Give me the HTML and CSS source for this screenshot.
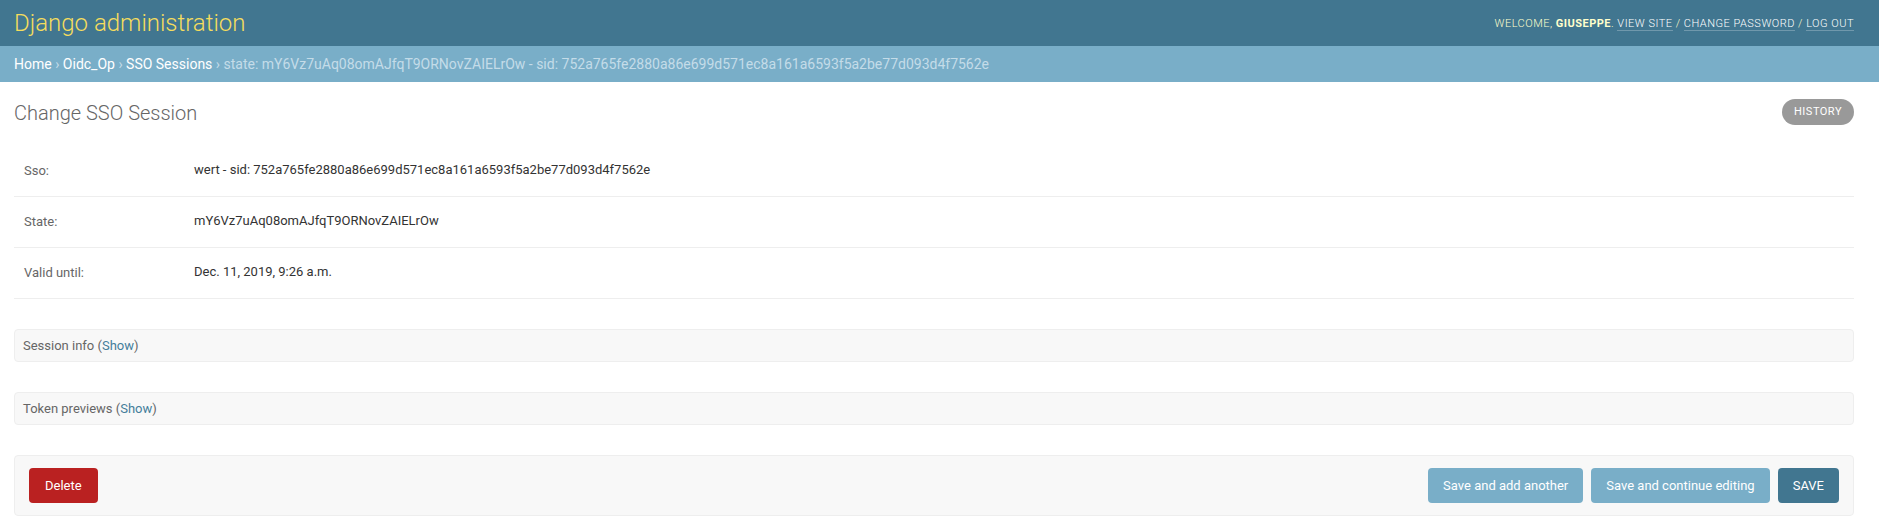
FILE: index.html
```html
<!DOCTYPE html>
<html lang="en">
<head>
<meta charset="utf-8">
<title>Change SSO Session | Django site admin</title>
<link rel="stylesheet" href="styles.css">
</head>
<body>
<header class="header">
  <h1 class="branding">Django administration</h1>
  <div class="user-tools">
    Welcome, <strong>giuseppe</strong>.
    <a href="#">View site</a> /
    <a href="#">Change password</a> /
    <a href="#">Log out</a>
  </div>
</header>
<nav class="breadcrumbs">
  <a href="#">Home</a> › <a href="#">Oidc_Op</a> › <a href="#">SSO Sessions</a> › state: mY6Vz7uAq08omAJfqT9ORNovZAIELrOw - sid: 752a765fe2880a86e699d571ec8a161a6593f5a2be77d093d4f7562e
</nav>
<main class="content">
  <div class="title-row">
    <h1 class="page-title">Change SSO Session</h1>
    <a class="history" href="#">History</a>
  </div>
  <section class="fields">
    <div class="form-row">
      <div class="label">Sso:</div>
      <div class="readonly">wert - sid: 752a765fe2880a86e699d571ec8a161a6593f5a2be77d093d4f7562e</div>
    </div>
    <div class="form-row">
      <div class="label">State:</div>
      <div class="readonly">mY6Vz7uAq08omAJfqT9ORNovZAIELrOw</div>
    </div>
    <div class="form-row">
      <div class="label">Valid until:</div>
      <div class="readonly">Dec. 11, 2019, 9:26 a.m.</div>
    </div>
  </section>
  <section class="collapsed">
    <h2 class="collapsed-title">Session info (<a href="#">Show</a>)</h2>
  </section>
  <section class="collapsed">
    <h2 class="collapsed-title">Token previews (<a href="#">Show</a>)</h2>
  </section>
  <div class="submit-row">
    <a class="deletelink" href="#">Delete</a>
    <div class="actions">
      <button class="btn" type="button">Save and add another</button>
      <button class="btn" type="button">Save and continue editing</button>
      <button class="btn btn-default" type="button">SAVE</button>
    </div>
  </div>
</main>
</body>
</html>
```
FILE: styles.css
```css
* { box-sizing: border-box; }
html, body {
  margin: 0;
  padding: 0;
}
body {
  font-family: Roboto, "Liberation Sans", sans-serif;
  font-size: 14px;
  color: #333;
  background: #fff;
}
a { text-decoration: none; }

.header {
  display: flex;
  justify-content: space-between;
  align-items: center;
  height: 46px;
  padding: 0 25px 0 14px;
  background: #417690;
  color: #ffc;
}
.branding {
  margin: 0;
  font-size: 24px;
  font-weight: 300;
  color: #f5dd5d;
  line-height: 28px;
}
.user-tools {
  font-size: 11px;
  font-weight: 300;
  letter-spacing: 0.5px;
  text-transform: uppercase;
  line-height: 14px;
  padding-top: 2px;
  color: #ffc;
}
.user-tools strong {
  font-weight: 700;
  color: #ffc;
}
.user-tools a {
  color: #fff;
  border-bottom: 1px solid rgba(255, 255, 255, 0.25);
}

.breadcrumbs {
  background: #79aec8;
  padding: 10px 25px 10px 14px;
  font-size: 14px;
  line-height: 16px;
  color: #c4dce8;
}
.breadcrumbs a { color: #fff; }

.content {
  padding: 20px 25px 0 14px;
}
.title-row {
  display: flex;
  justify-content: space-between;
  align-items: flex-start;
  margin-bottom: 21px;
}
.page-title {
  margin: 0;
  font-size: 20px;
  font-weight: 300;
  line-height: 23px;
  color: #666;
}
.history {
  margin-top: -3px;
  padding: 0 12px;
  height: 26px;
  line-height: 26px;
  border-radius: 15px;
  background: #999;
  color: #fff;
  font-size: 11px;
  font-weight: 400;
  letter-spacing: 0.5px;
  text-transform: uppercase;
}

.fields {
  margin-bottom: 30px;
}
.form-row {
  display: flex;
  align-items: flex-start;
  padding: 10px;
  border-bottom: 1px solid #eee;
  font-size: 13px;
}
.label {
  width: 170px;
  flex: none;
  padding: 7px 10px 7px 0;
  line-height: 16px;
  color: #666;
}
.readonly {
  padding: 6px 0 8px;
  line-height: 16px;
  color: #333;
}

.collapsed {
  border: 1px solid #eee;
  border-radius: 4px;
  background: #f8f8f8;
  margin-bottom: 30px;
}
.collapsed-title {
  margin: 0;
  padding: 8px;
  font-size: 13px;
  font-weight: 400;
  line-height: 15px;
  color: #666;
}
.collapsed-title a { color: #447e9b; }

.submit-row {
  display: flex;
  justify-content: space-between;
  align-items: center;
  padding: 12px 14px;
  background: #f8f8f8;
  border: 1px solid #eee;
  border-radius: 4px;
}
.deletelink {
  display: block;
  height: 35px;
  padding: 10px 16px;
  line-height: 15px;
  border-radius: 4px;
  background: #ba2121;
  color: #fff;
  font-size: 13px;
}
.actions {
  display: flex;
  gap: 8px;
}
.btn {
  height: 35px;
  padding: 10px 15px;
  line-height: 15px;
  border: none;
  border-radius: 4px;
  background: #79aec8;
  color: #fff;
  font-family: Roboto, "Liberation Sans", sans-serif;
  font-size: 13px;
  font-weight: 400;
}
.btn-default {
  background: #417690;
}
```
